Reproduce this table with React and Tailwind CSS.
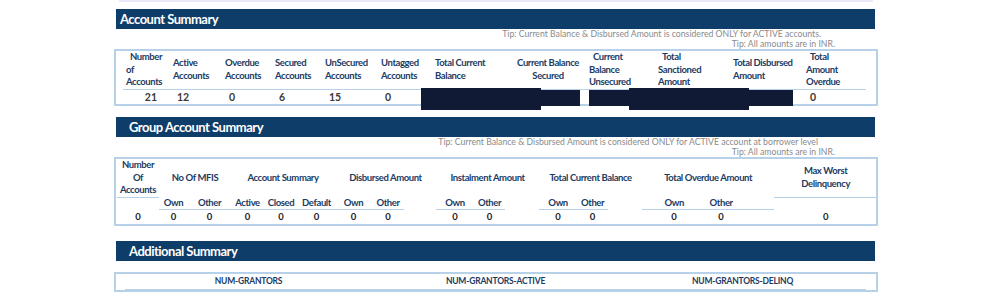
import React from 'react';

const font = { fontFamily: 'Lato, "Liberation Sans", sans-serif' };

const SectionBar = ({ title, indent }) => (
  <div className={`h-[20px] bg-[#0f3d69] ml-[2px] mr-[3px] flex items-center ${indent ? 'pl-[13px]' : 'pl-[4px]'}`}>
    <span className="text-white font-bold text-[13px] tracking-[-0.5px] leading-none">{title}</span>
  </div>
);

const Tip = ({ children, pr }) => (
  <div className={`text-right text-[8.7px] leading-[10px] text-[#8a8a8a] ${pr}`}>{children}</div>
);

const accountCols = [
  { w: 'w-[47px]', label: ['Number', 'of', 'Accounts'], value: '21', vcls: 'text-right pr-[13px]' },
  { w: 'w-[52px]', label: ['Active', 'Accounts'], value: '12' },
  { w: 'w-[50px]', label: ['Overdue', 'Accounts'], value: '0' },
  { w: 'w-[50px]', label: ['Secured', 'Accounts'], value: '6' },
  { w: 'w-[56px]', label: ['UnSecured', 'Accounts'], value: '15' },
  { w: 'w-[54px]', label: ['Untagged', 'Accounts'], value: '0' },
  { w: 'w-[78px]', label: ['Total Current', 'Balance'], value: '' },
  { w: 'w-[76px]', label: ['Current Balance', 'Secured'], value: '', cls: 'text-center' },
  { w: 'w-[69px]', label: ['Current', 'Balance', 'Unsecured'], value: '' },
  { w: 'w-[75px]', label: ['Total', 'Sanctioned', 'Amount'], value: '' },
  { w: 'w-[73px]', label: ['Total Disbursed', 'Amount'], value: '' },
  { w: 'w-[63px]', label: ['Total', 'Amount', 'Overdue'], value: '0' },
];

// redaction blocks drawn over the balance cells
const redactions = [
  'left-[307px] top-[39px] w-[120px] h-[22px]',
  'left-[427px] top-[41px] w-[39px] h-[16px]',
  'left-[475px] top-[41px] w-[40px] h-[16px]',
  'left-[515px] top-[39px] w-[120px] h-[22px]',
  'left-[635px] top-[41px] w-[44px] h-[16px]',
];

const AccountSummary = () => (
  <div className="relative">
    <div className="border-2 border-[#b6d1e8] pl-[7px] pr-[10px]">
      <table className="w-full border-collapse table-fixed">
        <thead>
          <tr className="border-b border-[#b6d1e8]">
            {accountCols.map((c, i) => (
              <th key={i} className={`${c.w} h-[36px] align-middle font-bold text-[9.5px] tracking-[-0.4px] leading-[12.5px] text-[#1c3b63] px-[3px] ${c.cls || 'text-left'}`}>
                {c.label.map((l, j) => (
                  <div key={j} className={`whitespace-nowrap ${c.label.length === 3 && j === 0 ? 'pl-[4px]' : ''}`}>{l}</div>
                ))}
              </th>
            ))}
          </tr>
        </thead>
        <tbody>
          <tr>
            {accountCols.map((c, i) => (
              <td key={i} className={`h-[15px] font-bold text-[10.5px] leading-none text-[#3a3a3a] ${c.vcls || 'text-left pl-[7px]'}`}>
                {c.value}
              </td>
            ))}
          </tr>
        </tbody>
      </table>
    </div>
    {redactions.map((r, i) => (
      <div key={i} className={`absolute bg-[#111a35] ${r}`} />
    ))}
  </div>
);

const groupCols = [
  { w: 'w-[42px]', sub: '', line: false },
  { w: 'w-[29px]', sub: 'Own', line: true },
  { w: 'w-[43px]', sub: 'Other', line: true },
  { w: 'w-[33px]', sub: 'Active', line: true },
  { w: 'w-[34px]', sub: 'Closed', line: true },
  { w: 'w-[37px]', sub: 'Default', line: true },
  { w: 'w-[37px]', sub: 'Own', line: true },
  { w: 'w-[32px]', sub: 'Other', line: true },
  { w: 'w-[32px]', sub: '', line: false, gap: true },
  { w: 'w-[38px]', sub: 'Own', line: true },
  { w: 'w-[31px]', sub: 'Other', line: true },
  { w: 'w-[34px]', sub: '', line: false, gap: true },
  { w: 'w-[38px]', sub: 'Own', line: true },
  { w: 'w-[31px]', sub: 'Other', line: true },
  { w: 'w-[34px]', sub: '', line: false, gap: true },
  { w: 'w-[64px]', sub: 'Own', line: true },
  { w: 'w-[30px]', sub: 'Other', line: true },
  { w: 'w-[38px]', sub: '', line: true, gap: true },
  { w: 'w-[103px]', sub: '', line: false },
];

const groupHeads = [
  { span: 1, label: ['Number', 'Of', 'Accounts'], line: true },
  { span: 2, label: ['No Of MFIS'] },
  { span: 3, label: ['Account Summary'] },
  { span: 3, label: ['Disbursed Amount'] },
  { span: 3, label: ['Instalment Amount'] },
  { span: 3, label: ['Total Current Balance'] },
  { span: 3, label: ['Total Overdue Amount'] },
  { span: 1, label: ['Max Worst', 'Delinquency'], line: true },
];

const GroupSummary = () => (
  <div className="border-2 border-[#b6d1e8] px-[1px]">
    <table className="w-full border-collapse table-fixed text-[#1c3b63]">
      <colgroup>
        {groupCols.map((c, i) => (
          <col key={i} className={c.w} />
        ))}
      </colgroup>
      <thead>
        <tr>
          {groupHeads.map((h, i) => (
            <th
              key={i}
              colSpan={h.span}
              className={`h-[38px] align-middle text-center font-bold text-[9.5px] tracking-[-0.4px] leading-[12.5px] ${h.line ? 'border-b border-[#b6d1e8]' : ''}`}
            >
              {h.label.map((l, j) => (
                <div key={j} className="whitespace-nowrap">{l}</div>
              ))}
            </th>
          ))}
        </tr>
        <tr>
          {groupCols.map((c, i) => (
            <th
              key={i}
              className={`h-[12px] text-center font-bold text-[9.5px] tracking-[-0.4px] leading-none ${c.line ? 'border-b border-[#b6d1e8]' : ''}`}
            >
              {c.sub}
            </th>
          ))}
        </tr>
      </thead>
      <tbody>
        <tr>
          {groupCols.map((c, i) => (
            <td key={i} className="h-[15px] text-center font-bold text-[9.5px] leading-none text-[#222222]">
              {c.gap ? '' : '0'}
            </td>
          ))}
        </tr>
      </tbody>
    </table>
  </div>
);

const AdditionalSummary = () => (
  <div className="border-2 border-[#b6d1e8] pl-[9px] pr-[10px]">
    <table className="w-full border-collapse table-fixed">
      <thead>
        <tr className="border-b border-[#b6d1e8]">
          {['NUM-GRANTORS', 'NUM-GRANTORS-ACTIVE', 'NUM-GRANTORS-DELINQ'].map((t) => (
            <th key={t} className="h-[15px] text-center font-bold text-[8.5px] tracking-[-0.2px] leading-none text-[#1c3b63]">
              {t}
            </th>
          ))}
        </tr>
      </thead>
    </table>
  </div>
);

export default function App() {
  return (
    <div className="w-[992px] h-[295px] overflow-hidden bg-white" style={font}>
      <div className="w-[764px] mx-auto">
        <div className="h-[2px] bg-[#e9e9f9] ml-[5px] mr-[5px]" />
        <div className="h-[7px]" />
        <SectionBar title="Account Summary" />
        <div className="pt-[0px]">
          <Tip pr="pr-[57px]">Tip: Current Balance &amp; Disbursed Amount is considered ONLY for ACTIVE accounts.</Tip>
          <Tip pr="pr-[43px]">Tip: All amounts are in INR.</Tip>
        </div>
        <AccountSummary />

        <div className="mt-[11px]">
          <SectionBar title="Group Account Summary" indent />
        </div>
        <div>
          <Tip pr="pr-[60px]">Tip: Current Balance &amp; Disbursed Amount is considered ONLY for ACTIVE account at borrower level</Tip>
          <Tip pr="pr-[43px]">Tip: All amounts are in INR.</Tip>
        </div>
        <GroupSummary />

        <div className="mt-[15px]">
          <SectionBar title="Additional Summary" indent />
        </div>
        <div className="mt-[11px]">
          <AdditionalSummary />
        </div>
      </div>
    </div>
  );
}
